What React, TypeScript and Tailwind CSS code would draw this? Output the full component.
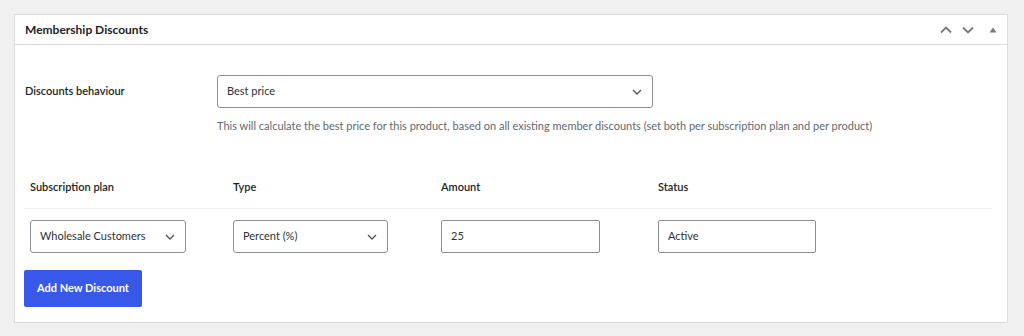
import React from "react";

const font = { fontFamily: '"Lato", "Liberation Sans", sans-serif' };

function Chevron({ className = "" }: { className?: string }) {
  return (
    <svg width="10" height="6" viewBox="0 0 10 6" className={className}>
      <path d="M1 1l4 4 4-4" fill="none" stroke="#50575e" strokeWidth="1.4" />
    </svg>
  );
}

function SelectBox({ value, w }: { value: string; w: string }) {
  return (
    <div
      className={`${w} h-[33px] border border-[#8c8f94] rounded-[3px] bg-white flex items-center justify-between pl-[9px] pr-[10px] text-[11px] text-[#2c3338]`}
    >
      <span>{value}</span>
      <Chevron />
    </div>
  );
}

function InputBox({ value, w }: { value: string; w: string }) {
  return (
    <div className={`${w} h-[33px] border border-[#8c8f94] rounded-[2px] bg-white flex items-center pl-[9px] text-[11px] text-[#2c3338]`}>
      {value}
    </div>
  );
}

export default function App() {
  return (
    <div className="bg-[#f0f0f1] h-[336px] pt-[14px] pl-[14px] pr-[16px]" style={font}>
      <div className="bg-white border border-[#dcdcde] h-[309px]">
        <div className="h-[30px] border-b border-[#dcdcde] flex items-center justify-between pl-[10px] pr-[10px]">
          <span className="text-[12px] font-bold text-[#1d2327]">Membership Discounts</span>
          <div className="flex items-center">
            <svg width="12" height="8" viewBox="0 0 12 8" className="mr-[10px]">
              <path d="M1 6.5l5-5 5 5" fill="none" stroke="#787c82" strokeWidth="1.8" />
            </svg>
            <svg width="12" height="8" viewBox="0 0 12 8" className="mr-[15px]">
              <path d="M1 1.5l5 5 5-5" fill="none" stroke="#787c82" strokeWidth="1.8" />
            </svg>
            <svg width="8" height="6" viewBox="0 0 8 6" className="mr-[0px]">
              <path d="M4 0.5L7.5 5.5H0.5z" fill="#787c82" />
            </svg>
          </div>
        </div>
        <div className="pt-[30px] pl-[9px] pr-[15px]">
          <div className="flex items-center">
            <div className="w-[193px] pl-[1px] text-[11px] font-semibold text-[#1d2327]">Discounts behaviour</div>
            <SelectBox value="Best price" w="w-[436px]" />
          </div>
          <div className="ml-[193px] mt-[11px] text-[11px] leading-[14px] text-[#646970]">
            This will calculate the best price for this product, based on all existing member discounts (set both per subscription plan and per product)
          </div>
          <div className="mt-[46px] border-b border-[#f0f0f1] flex h-[30px] items-start text-[11px] font-semibold text-[#1d2327]">
            <div className="w-[203px] pl-[6px]">Subscription plan</div>
            <div className="w-[208px] pl-[6px]">Type</div>
            <div className="w-[217px] pl-[6px]">Amount</div>
            <div className="pl-[6px]">Status</div>
          </div>
          <div className="flex pt-[11px]">
            <div className="w-[203px] pl-[6px]">
              <SelectBox value="Wholesale Customers" w="w-[156px]" />
            </div>
            <div className="w-[208px] pl-[6px]">
              <SelectBox value="Percent (%)" w="w-[155px]" />
            </div>
            <div className="w-[217px] pl-[6px]">
              <InputBox value="25" w="w-[159px]" />
            </div>
            <div className="pl-[6px]">
              <InputBox value="Active" w="w-[158px]" />
            </div>
          </div>
          <button className="mt-[17px] w-[118px] h-[37px] bg-[#3858e9] rounded-[2px] text-white text-[11px] font-bold">
            Add New Discount
          </button>
        </div>
      </div>
    </div>
  );
}
